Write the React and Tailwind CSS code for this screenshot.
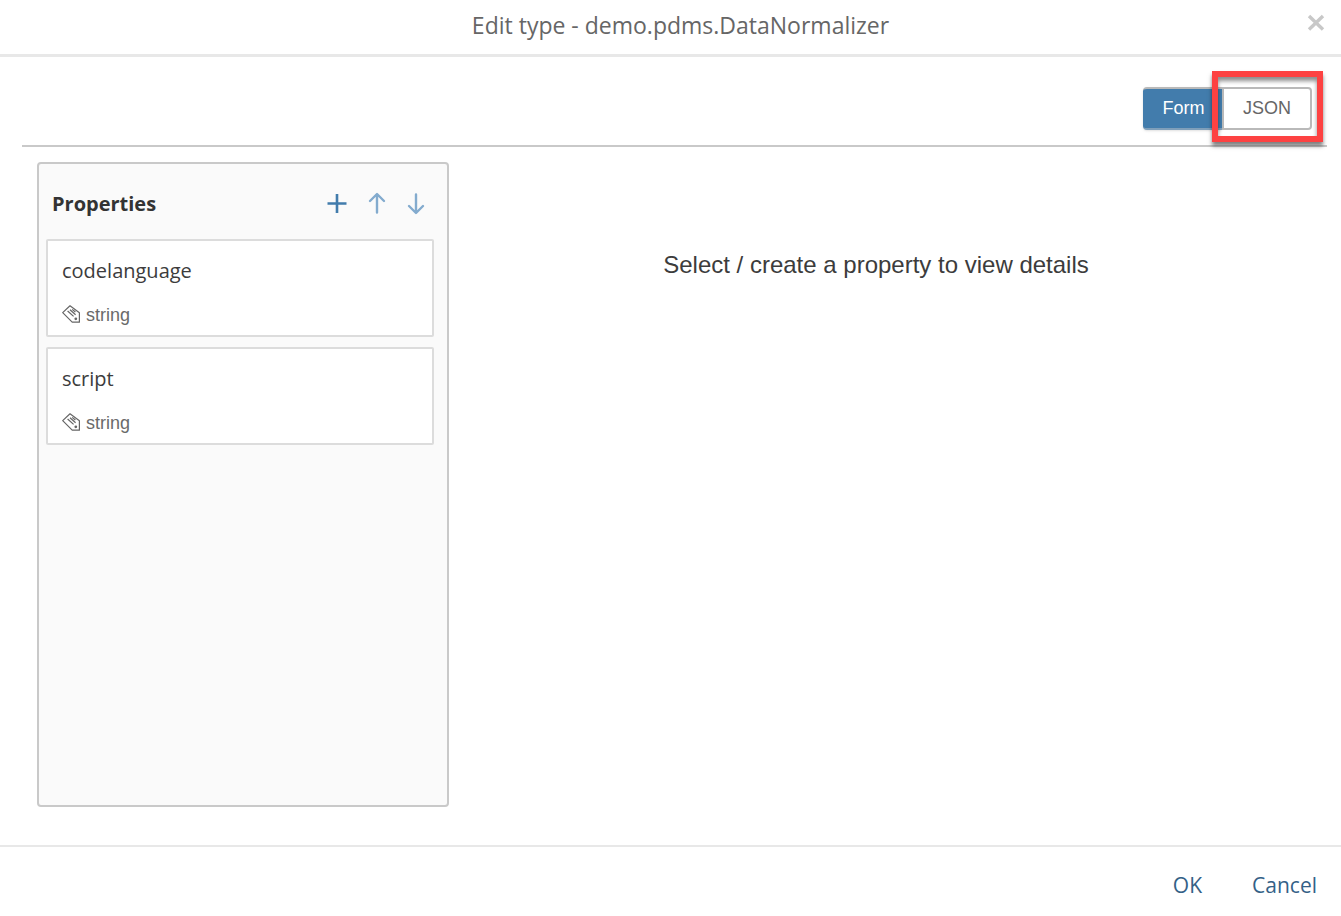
import React from "react";

const properties = [
  { name: "codelanguage", type: "string" },
  { name: "script", type: "string" },
];

function TagIcon() {
  return (
    <svg viewBox="0 0 20 20" className="h-5 w-5 shrink-0" fill="none" stroke="#666" strokeWidth="1.2" aria-hidden="true">
      <path d="M0.7 7.6 8 0.8 17.4 7.8V17.2H10.2Z" strokeLinejoin="round" />
      <path d="M5.6 6 11.6 11.4M8 4.8 13.6 9.8M10.2 4.4 13.4 7" />
      <circle cx="13.8" cy="13.8" r="1.4" fill="#666" stroke="none" />
    </svg>
  );
}

function IconButton({ label, className, children }) {
  return (
    <button type="button" aria-label={label} className={className}>
      <svg viewBox="0 0 24 24" className="h-6 w-6" fill="none" stroke="currentColor" aria-hidden="true">
        {children}
      </svg>
    </button>
  );
}

function PropertyCard({ name, type }) {
  return (
    <li>
      <button type="button" className="flex h-[98px] w-full flex-col justify-between rounded-xs border-2 border-[#dcdcdc] bg-white px-[14px] pt-4 pb-2 text-left">
        <span className="font-['Open_Sans',sans-serif] text-[20px] leading-7 text-[#3c3c3c]">{name}</span>
        <span className="flex items-center gap-1 font-['Liberation_Sans',sans-serif] text-[18px] leading-6 text-[#6a6a6a]">
          <TagIcon />
          {type}
        </span>
      </button>
    </li>
  );
}

export default function App() {
  return (
    <div role="dialog" aria-labelledby="dialog-title" className="flex min-h-screen flex-col bg-white font-['Open_Sans',sans-serif]">
      <header className="relative flex h-[57px] items-center justify-center border-b-3 border-[#e8e8e8] pb-1 pl-5">
        <h1 id="dialog-title" className="text-[23px] leading-8 text-[#666]">Edit type - demo.pdms.DataNormalizer</h1>
        <button type="button" aria-label="Close" className="absolute top-3 right-[13px] text-[#c8c8c8]">
          <svg viewBox="0 0 24 24" className="h-6 w-6" stroke="currentColor" strokeWidth="3.4" aria-hidden="true">
            <path d="M5 4 19 17.5M19 4 5 17.5" />
          </svg>
        </button>
      </header>

      <main className="flex flex-1 flex-col pr-[14px] pl-[22px]">
        <div className="flex h-[90px] items-center justify-end border-b-2 border-[#c9c9c9] pt-[14px] pr-[15px]">
          <div className="flex font-['Liberation_Sans',sans-serif] text-[18px] leading-6">
            <button type="button" aria-pressed="true" className="h-[43px] w-[79px] rounded-l-sm border-y-2 border-t-[#b9b9b9] border-b-[#7f9fba] bg-[#427cac] pl-0.5 text-white shadow-sm">
              Form
            </button>
            <div className="relative">
              <button type="button" aria-pressed="false" className="h-[43px] w-[90px] rounded-r-sm border-2 border-[#b9b9b9] bg-white text-[#666]">
                JSON
              </button>
              <div className="pointer-events-none absolute -top-4 -right-[11px] -bottom-3 -left-[10px] border-6 border-[#fd4242] shadow-[0px_4px_4px_rgba(0,0,0,0.5),inset_0px_4px_4px_rgba(0,0,0,0.45)]" />
            </div>
          </div>
        </div>

        <div className="flex flex-1 pt-[15px] pb-[38px] pl-[15px]">
          <section className="w-[412px] shrink-0 rounded border-2 border-[#c9c9c9] bg-[#fafafa] pr-[13px] pl-[7px]">
            <div className="flex h-[75px] items-center justify-between pt-[5px] pr-[6px] pl-[6px]">
              <h2 className="text-[20px] leading-7 font-bold text-[#333]">Properties</h2>
              <div className="flex gap-[15px]">
                <IconButton label="Add property" className="text-[#427cac]">
                  <path strokeWidth="2.6" d="M1.5 11.5H20.5M11 2V21" />
                </IconButton>
                <IconButton label="Move up" className="text-[#83abce]">
                  <path strokeWidth="2.4" strokeLinecap="round" strokeLinejoin="round" d="M12 20.5V2.5M5 9 12 2 19 9" />
                </IconButton>
                <IconButton label="Move down" className="text-[#83abce]">
                  <path strokeWidth="2.4" strokeLinecap="round" strokeLinejoin="round" d="M12 2.5V20.5M5 14 12 21 19 14" />
                </IconButton>
              </div>
            </div>
            <ul className="flex flex-col gap-[10px]">
              {properties.map((property) => (
                <PropertyCard key={property.name} name={property.name} type={property.type} />
              ))}
            </ul>
          </section>
          <section className="flex-1 pt-[87px] pr-[24px] text-center">
            <p className="font-['Liberation_Sans',sans-serif] text-[24px] leading-8 text-[#3c3c3c]">Select / create a property to view details</p>
          </section>
        </div>
      </main>

      <footer className="flex h-[71px] items-center justify-end gap-[50px] border-t-2 border-[#e8e8e8] pt-[6px] pr-6 text-[21px] leading-7 text-[#346187]">
        <button type="button">OK</button>
        <button type="button">Cancel</button>
      </footer>
    </div>
  );
}
